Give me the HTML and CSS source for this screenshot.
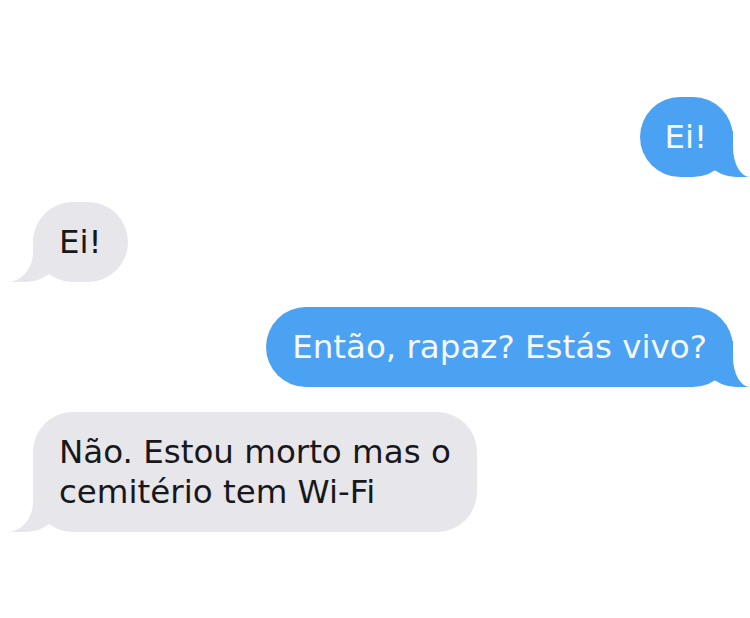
FILE: index.html
```html
<!doctype html>
<html>

<head>
   <meta charset="utf-8">
   <title>Mensagens</title>
   <link rel="stylesheet" href="styles.css">
</head>

<body>
   <div class="chat">
      <div class="bubble sent first">Ei!</div>
      <div class="bubble received">Ei!</div>
      <div class="bubble sent">Então, rapaz? Estás vivo?</div>
      <div class="bubble received">Não. Estou morto mas o<br>cemitério tem Wi-Fi</div>
   </div>
</body>

</html>
```

FILE: styles.css
```css
html,
body {
   padding: 0;
   margin: 0;
   background: #FFF;
   overflow: hidden;
}

.chat {
   display: flex;
   flex-direction: column;
   gap: 25px;
   padding: 97px 17px 0 33px;
   font-family: "DejaVu Sans", sans-serif;
   font-size: 32.5px;
   line-height: 40px;
   overflow: hidden;
}

.bubble {
   position: relative;
   padding: 20px 26px;
   border-radius: 40px;
   max-width: 440px;
   z-index: 0;
}

.bubble::before,
.bubble::after {
   content: "";
   position: absolute;
   bottom: 0;
   height: 46px;
}

.sent {
   align-self: flex-end;
   background: #4ba2f2;
   color: #F5F9FD;
}
.sent.first {
   padding: 20px 26px 20px 24px;
}
.sent::before {
   z-index: -1;
   right: -17px;
   width: 52px;
   background: #4ba2f2;
   border-bottom-left-radius: 38px;
}
.sent::after {
   z-index: -1;
   right: -17px;
   width: 17px;
   background: #FFF;
   border-bottom-left-radius: 17px 30px;
}

.received {
   align-self: flex-start;
   background: #e6e6eb;
   color: #18181a;
}
.received::before {
   z-index: -1;
   left: -25px;
   width: 56px;
   background: #e6e6eb;
   border-bottom-right-radius: 38px;
}
.received::after {
   z-index: -1;
   left: -33px;
   width: 33px;
   background: #FFF;
   border-bottom-right-radius: 26px 30px;
}
```
